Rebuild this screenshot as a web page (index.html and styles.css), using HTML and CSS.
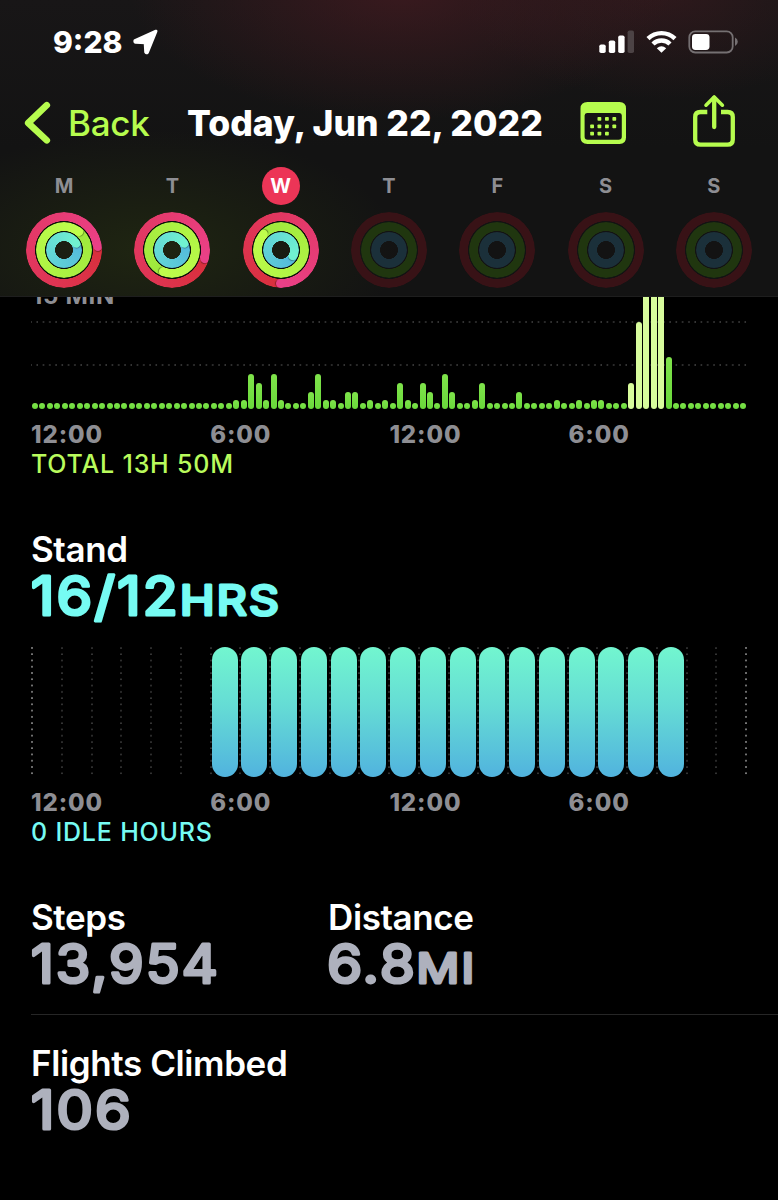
FILE: index.html
```html
<!DOCTYPE html>
<html lang="en">
  <head>
    <title>Activity - Today, Jun 22, 2022</title>
    <meta charset="utf-8">
    <meta name="viewport" content="width=device-width, initial-scale=1">
    <link rel="stylesheet" href="styles.css">
  </head>
  <body>
    <header class="header">
      <!-- status bar -->
      <div class="status">
        <span class="clock">9:28</span>
        <svg class="location" width="26" height="26" viewBox="0 0 26 26">
          <path d="M23 2.2 L2 11.6 Q1.5 12.9 2.6 13.2 L12.2 13.8 L12.7 23 Q13.4 24.4 14.4 23.4 Z" fill="#fff" stroke="#fff" stroke-width="3" stroke-linejoin="round"/>
        </svg>
        <div class="status-right">
          <svg width="36" height="24" viewBox="0 0 36 24">
            <rect x="0.3" y="14.5" width="6.4" height="8.5" rx="1.8" fill="#fff"/>
            <rect x="9.8" y="10.5" width="6.4" height="12.5" rx="1.8" fill="#fff"/>
            <rect x="19.2" y="5.5" width="6.4" height="17.5" rx="1.8" fill="#fff"/>
            <rect x="28.6" y="0.5" width="6.4" height="22.5" rx="1.8" fill="#4c4345"/>
          </svg>
          <svg class="wifi" width="31" height="24" viewBox="0 0 31 24">
            <g fill="none" stroke="#fff" stroke-width="4.4">
              <path d="M2 8.6 A19.3 19.3 0 0 1 29 8.6"/>
              <path d="M7 14 A12 12 0 0 1 24 14"/>
            </g>
            <path d="M10.8 18.2 Q15.5 14.4 20.2 18.2 L15.5 22.8 Z" fill="#fff"/>
          </svg>
          <svg class="battery" width="51" height="24" viewBox="0 0 51 24">
            <rect x="1.3" y="1.3" width="43.4" height="21.2" rx="6" fill="none" stroke="#757072" stroke-width="1.8"/>
            <rect x="4" y="4" width="17.5" height="16" rx="3.4" fill="#fff"/>
            <path d="M47 7.5 Q49.8 9 49.8 11.8 Q49.8 14.6 47 16 Z" fill="#757072"/>
          </svg>
        </div>
      </div>

      <!-- navigation -->
      <div class="nav">
        <svg class="chevron" width="28" height="44" viewBox="0 0 28 44">
          <path d="M23.8 4.2 L5.2 22 L23.8 39.3" fill="none" stroke="#b6fc4e" stroke-width="6.6" stroke-linecap="round" stroke-linejoin="round"/>
        </svg>
        <span class="back">Back</span>
        <h1 class="title">Today, Jun 22, 2022</h1>
        <svg class="calendar" width="48" height="44" viewBox="0 0 48 44">
          <path fill="#b6fc4e" fill-rule="evenodd" d="M7.5 1 H39.5 Q46 1 46 7.5 V36.5 Q46 43 39.5 43 H7.5 Q0.5 43 0.5 36.5 V7.5 Q0.5 1 7.5 1 Z M7 12 Q4.6 12 4.6 14.5 V35.5 Q4.6 38.8 7.8 38.8 H38.6 Q41.8 38.8 41.8 35.5 V14.5 Q41.8 12 39.5 12 Z"/>
          <g fill="#b6fc4e">
            <rect x="17.5" y="16" width="3.8" height="3.8" rx=".8"/>
            <rect x="25" y="16" width="3.8" height="3.8" rx=".8"/>
            <rect x="32.4" y="16" width="3.8" height="3.8" rx=".8"/>
            <rect x="10.2" y="23.4" width="3.8" height="3.8" rx=".8"/>
            <rect x="17.5" y="23.4" width="3.8" height="3.8" rx=".8"/>
            <rect x="25" y="23.4" width="3.8" height="3.8" rx=".8"/>
            <rect x="32.4" y="23.4" width="3.8" height="3.8" rx=".8"/>
            <rect x="10.2" y="30.7" width="3.8" height="3.8" rx=".8"/>
            <rect x="17.5" y="30.7" width="3.8" height="3.8" rx=".8"/>
            <rect x="25" y="30.7" width="3.8" height="3.8" rx=".8"/>
          </g>
        </svg>
        <svg class="share" width="44" height="54" viewBox="0 0 44 54">
          <g fill="none" stroke="#b6fc4e" stroke-width="4.3" stroke-linejoin="round">
            <path d="M15.3 18 H8.5 Q3.2 18 3.2 23 V45.5 Q3.2 50.7 8.5 50.7 H35.5 Q40.8 50.7 40.8 45.5 V23 Q40.8 18 35.5 18 H29"/>
            <path stroke-linecap="round" d="M22.2 33 V4"/>
            <path stroke-width="3.6" stroke-linecap="round" d="M14 11.2 L22.2 3 L30.4 11.2"/>
          </g>
        </svg>
      </div>

      <div class="week" id="week"></div>
    </header>

    <main>
      <section>
        <div class="exercise" id="exercise">
          <span class="scale">15 MIN</span>
        </div>
        <div class="axis"><span>12:00</span><span>6:00</span><span>12:00</span><span>6:00</span></div>
        <p class="note green">TOTAL 13H 50M</p>
      </section>

      <section class="block">
        <h2>Stand</h2>
        <svg class="value cyan" width="300" height="60">
          <text x="0" y="46" textLength="149" lengthAdjust="spacingAndGlyphs">16/12</text>
          <text x="149" y="46" textLength="101" lengthAdjust="spacingAndGlyphs" class="unit">HRS</text>
        </svg>
        <div class="stand" id="stand"></div>
        <div class="axis"><span>12:00</span><span>6:00</span><span>12:00</span><span>6:00</span></div>
        <p class="note cyan">0 IDLE HOURS</p>
      </section>

      <section class="block totals">
        <div class="total">
          <h2>Steps</h2>
          <svg class="value" width="260" height="60">
            <text x="0" y="46" textLength="189" lengthAdjust="spacingAndGlyphs">13,954</text>
          </svg>
        </div>
        <div class="total">
          <h2>Distance</h2>
          <svg class="value" width="260" height="60">
            <text x="-1" y="46" textLength="90" lengthAdjust="spacingAndGlyphs">6.8</text>
            <text x="88.5" y="46" textLength="60" lengthAdjust="spacingAndGlyphs" class="unit">MI</text>
          </svg>
        </div>
      </section>

      <section class="last">
        <h2>Flights Climbed</h2>
        <svg class="value" width="260" height="60">
          <text x="0" y="46" textLength="102" lengthAdjust="spacingAndGlyphs">106</text>
        </svg>
      </section>
    </main>

    <script src="script.js"></script>
  </body>
</html>
```
FILE: styles.css
```css
* {
  box-sizing: border-box;
}
body {
  margin: 0;
  height: 1200px;
  overflow: hidden;
  background: #000;
  color: #fff;
  font-family: Inter, "Liberation Sans", sans-serif;
}
h1, h2, p {
  margin: 0;
}
svg {
  display: block;
  flex: none;
}

/* header */
.header {
  height: 297px;
  border-bottom: 1px solid #1e1e1e;
  background:
    radial-gradient(ellipse 270px 130px at 400px -10px, rgba(75, 27, 34, .65), transparent),
    radial-gradient(ellipse 200px 110px at 660px -10px, rgba(65, 27, 32, .55), transparent),
    radial-gradient(ellipse 250px 120px at 150px 250px, rgba(34, 42, 17, .8), transparent),
    linear-gradient(#181617, #131313 50%);
}
.status {
  display: flex;
  align-items: center;
  height: 84px;
  padding: 0 39px 0 53px;
}
.clock {
  width: 80px;
  font-size: 30px;
  font-weight: 800;
  white-space: nowrap;
}
.status-right {
  display: flex;
  margin-left: auto;
}
.wifi {
  margin-left: 11px;
}
.battery {
  margin-left: 11px;
}
.nav {
  display: flex;
  align-items: center;
  height: 78px;
  padding-left: 23px;
  font-size: 35px;
  white-space: nowrap;
}
.back {
  width: 119px;
  margin-left: 17px;
  color: #b6fc4e;
  font-weight: 500;
  letter-spacing: -.3px;
}
.title {
  width: 393px;
  font-size: 35.5px;
  font-weight: 770;
}
.share {
  margin: -4px 0 0 64px;
}

/* week rings */
.week {
  display: grid;
  grid-template-columns: repeat(7, 1fr);
  justify-items: center;
  padding: 5px 10px 0;
}
.day {
  display: flex;
  flex-direction: column;
  align-items: center;
  gap: 7px;
}
.letter {
  width: 38px;
  height: 38px;
  border-radius: 50%;
  color: #8e8e93;
  font-size: 20px;
  font-weight: 750;
  line-height: 38px;
  text-align: center;
}
.today .letter {
  background: #ec3557;
  color: #fff;
}
.rings {
  position: relative;
  width: 76px;
  height: 76px;
  border-radius: 50%;
  background: radial-gradient(closest-side, transparent 8.8px, #0c100a 9.6px, #0c100a 36px, transparent 37px);
}
.ring {
  position: absolute;
  inset: calc(38px - var(--r));
  border-radius: 50%;
  background: conic-gradient(from var(--end), var(--from), var(--to));
  -webkit-mask: radial-gradient(closest-side, transparent calc(100% - 9.3px), #000 calc(100% - 8.8px));
  mask: radial-gradient(closest-side, transparent calc(100% - 9.3px), #000 calc(100% - 8.8px));
}
.ring::after {
  content: "";
  position: absolute;
  top: 0;
  left: calc(50% - 4.5px);
  width: 9px;
  height: 9px;
  border-radius: 50%;
  background: var(--to);
  box-shadow: 1.6px 0 1px -.8px rgba(0, 0, 0, .4);
  transform: rotate(var(--end));
  transform-origin: 4.5px var(--r);
}
.move {
  --r: 38px;
  --from: #d92f3b;
  --to: #ea4087;
}
.exercise-ring {
  --r: 28px;
  --from: #9ee83c;
  --to: #bffd4c;
}
.stand-ring {
  --r: 18px;
  --from: #53b8dc;
  --to: #70f2d0;
}
.future .rings {
  background: none;
}
.future .ring::after {
  display: none;
}
.future .move {
  background: #381216;
}
.future .exercise-ring {
  background: #20360f;
}
.future .stand-ring {
  background: #1b303a;
}

/* exercise chart */
main {
  padding-left: 31px;
}
.exercise {
  position: relative;
  display: flex;
  align-items: flex-end;
  gap: 1.459px;
  width: 716px;
  height: 112px;
  padding-left: 1px;
  overflow: hidden;
  background:
    radial-gradient(circle at 1px 1px, #444 .5px, transparent 1px) -1px 24px / 6.27px 43px repeat-x,
    radial-gradient(circle at 1px 1px, #444 .5px, transparent 1px) -1px 67px / 6.27px 43px repeat-x;
}
.scale {
  position: absolute;
  top: -17px;
  left: 1px;
  color: #8e8e93;
  font-size: 24px;
  font-weight: 700;
  letter-spacing: .7px;
  line-height: 31px;
}
.bar {
  flex: none;
  width: 6px;
  border-radius: 3px;
  background: linear-gradient(#7fe34b, #69d93a);
}
.bar.workout {
  background: #d8fc9c;
}
.axis {
  display: grid;
  grid-template-columns: repeat(4, 179.2px);
  margin-top: 10px;
  color: #8e8e93;
  font-size: 24px;
  font-weight: 770;
  letter-spacing: .9px;
  line-height: 31px;
}
.note {
  font-size: 25px;
  font-weight: 500;
  letter-spacing: .8px;
  line-height: 29px;
}
.green {
  color: #b9fb5c;
}
.cyan {
  color: #76fbf3;
}

/* stand and totals */
.block {
  margin-top: 50px;
}
h2 {
  font-size: 35px;
  font-weight: 560;
  letter-spacing: -.4px;
  line-height: 40px;
}
.value {
  overflow: visible;
  fill: #aeb1bd;
  stroke: #aeb1bd;
  stroke-width: 3.2px;
  stroke-linejoin: round;
  font-size: 53px;
  font-weight: 400;
  letter-spacing: 2px;
}
.value.cyan {
  fill: #76fbf3;
  stroke: #76fbf3;
}
.unit {
  font-size: 41px;
  letter-spacing: 2px;
}
.stand {
  display: grid;
  grid-template-columns: repeat(24, 29.75px);
  width: 716px;
  height: 130px;
  margin-top: 18px;
  background: radial-gradient(circle at 1px 1px, #777 .7px, transparent 1.1px) 714px 0 / 6px 6.27px repeat-y;
}
.hour {
  padding-left: 2.2px;
  background: radial-gradient(circle at 1px 1px, #444 .5px, transparent 1px) 0 0 / 30px 6.27px repeat-y;
}
.hour:first-child {
  background: radial-gradient(circle at 1px 1px, #777 .7px, transparent 1.1px) 0 0 / 30px 6.27px repeat-y;
}
.pill {
  width: 26px;
  height: 130px;
  border-radius: 13px;
  background: linear-gradient(#72f6cf, #65dcd5 45%, #51b3de);
}
.totals {
  display: grid;
  grid-template-columns: 297px 1fr;
  padding-bottom: 17px;
  border-bottom: 1px solid #262626;
}
.last {
  margin-top: 28px;
}
```
FILE: script.js
```js
// angles are where each ring's head stops
var days = [
  { letter: 'M', rings: [84, 38, 60] },
  { letter: 'T', rings: [105, 203, 60] },
  { letter: 'W', rings: [180, 313, 115], today: true },
  { letter: 'T' },
  { letter: 'F' },
  { letter: 'S' },
  { letter: 'S' }
];
var ringNames = ['move', 'exercise-ring', 'stand-ring'];

// exercise minutes for every quarter of an hour
var minutes = [
  0, 0, 0, 0, 0, 0, 0, 0, 0, 0, 0, 0, 0, 0, 0, 0, 0, 0, 0, 0, 0, 0, 0, 0,
  0, 0, 0, 1, 1, 4, 3, 1, 4, 1, 0, 0, 0, 2, 4, 1, 1, 0, 2, 2, 0, 1, 0, 1,
  0, 3, 1, 0, 3, 2, 0, 4, 2, 0, 0, 1, 3, 0, 0, 0, 0, 2, 0, 0, 0, 0, 1, 0,
  0, 1, 0, 1, 1, 0, 0, 0, 3, 10, 15, 15, 15, 6, 0, 0, 0, 0, 0, 0, 0, 0, 0, 0
];

var week = document.getElementById('week');
days.forEach(function (day) {
  var type = day.today ? ' today' : day.rings ? '' : ' future';
  var html = '<div class="day' + type + '"><span class="letter">' + day.letter + '</span><div class="rings">';
  ringNames.forEach(function (name, i) {
    var end = day.rings ? day.rings[i] : 0;
    html += '<div class="ring ' + name + '" style="--end: ' + end + 'deg"></div>';
  });
  week.innerHTML += html + '</div></div>';
});

var exercise = document.getElementById('exercise');
minutes.forEach(function (min, i) {
  var bar = document.createElement('div');
  bar.className = i >= 80 && i <= 84 ? 'bar workout' : 'bar';
  bar.style.height = Math.max(6, min * 8.66) + 'px';
  exercise.appendChild(bar);
});

// stood every hour from 6:00 to 21:00
var stand = document.getElementById('stand');
for (var h = 0; h < 24; h++) {
  var hour = document.createElement('div');
  hour.className = 'hour';
  if (h >= 6 && h <= 21) {
    hour.innerHTML = '<div class="pill"></div>';
  }
  stand.appendChild(hour);
}
```
